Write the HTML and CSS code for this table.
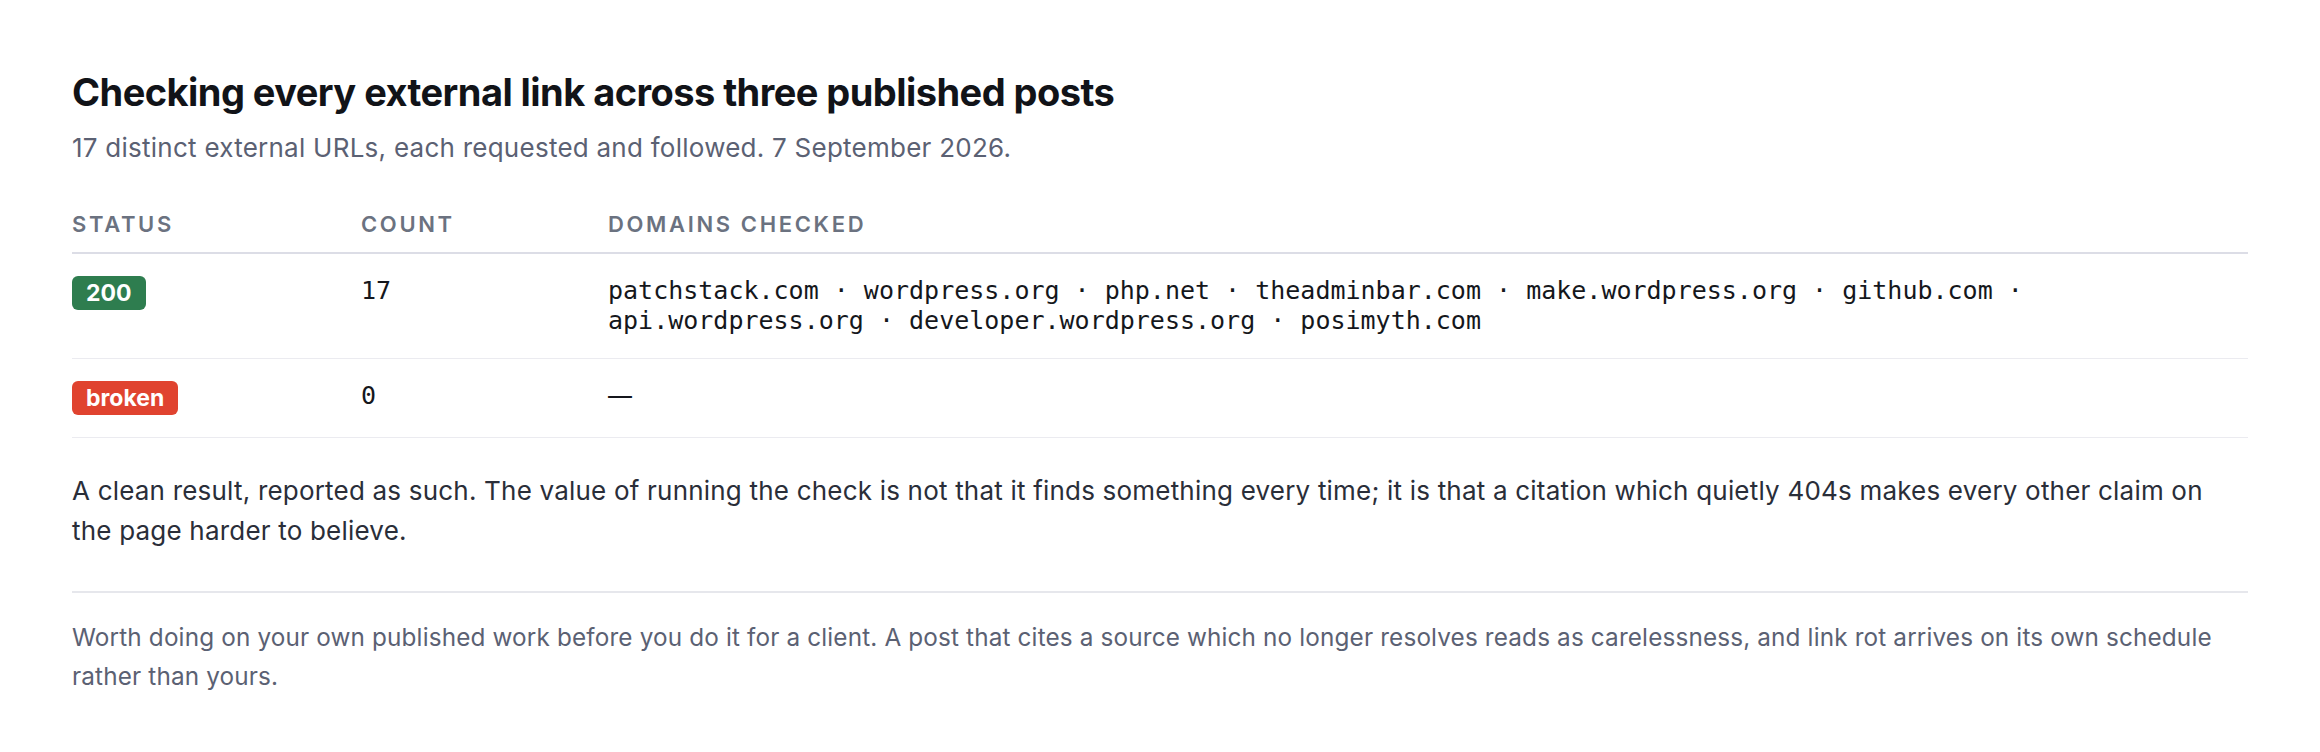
FILE: index.html
```html
<!DOCTYPE html>
<html lang="en">
<head>
<meta charset="utf-8">
<title>Link check</title>
<link rel="stylesheet" href="styles.css">
</head>
<body>
<main class="report">
  <h1 class="title">Checking every external link across three published posts</h1>
  <p class="subtitle">17 distinct external URLs, each requested and followed. 7 September 2026.</p>

  <div class="table">
    <div class="row head">
      <div class="cell">Status</div>
      <div class="cell">Count</div>
      <div class="cell">Domains checked</div>
    </div>
    <div class="row">
      <div class="cell"><span class="badge ok">200</span></div>
      <div class="cell mono">17</div>
      <div class="cell mono">patchstack.com · wordpress.org · php.net · theadminbar.com · make.wordpress.org · github.com · api.wordpress.org · developer.wordpress.org · posimyth.com</div>
    </div>
    <div class="row">
      <div class="cell"><span class="badge bad">broken</span></div>
      <div class="cell mono">0</div>
      <div class="cell mono"><span class="dash">—</span></div>
    </div>
  </div>

  <p class="body">A clean result, reported as such. The value of running the check is not that it finds something every time; it is that a citation which quietly 404s makes every other claim on the page harder to believe.</p>

  <hr class="rule">

  <p class="note">Worth doing on your own published work before you do it for a client. A post that cites a source which no longer resolves reads as carelessness, and link rot arrives on its own schedule rather than yours.</p>
</main>
</body>
</html>
```

FILE: styles.css
```css
* { box-sizing: border-box; }

html, body {
  margin: 0;
  padding: 0;
  background: #ffffff;
}

body {
  font-family: Inter, "Noto Sans", "Liberation Sans", sans-serif;
  color: #2a2e39;
}

.report {
  padding: 69px 72px 40px;
}

.title {
  margin: 0;
  font-size: 38px;
  line-height: 46px;
  font-weight: 700;
  letter-spacing: -0.55px;
  color: #111318;
}

.subtitle {
  margin: 14px 0 0;
  font-size: 26px;
  line-height: 38px;
  letter-spacing: 0.25px;
  color: #5b6173;
}

.table {
  margin-top: 43px;
}

.row {
  display: grid;
  grid-template-columns: 289px 247px 1fr;
  align-items: start;
  padding: 22px 0;
  border-bottom: 1px solid #ebebf0;
}

.row.head {
  padding: 0 0 14px;
  border-bottom: 2px solid #dcdde6;
}

.row.head .cell {
  font-size: 22px;
  line-height: 28px;
  font-weight: 600;
  letter-spacing: 0.12em;
  text-transform: uppercase;
  color: #6b7280;
}

.mono {
  font-family: "DejaVu Sans Mono", "Liberation Mono", monospace;
  font-size: 25px;
  line-height: 30px;
  color: #15171c;
}

.dash {
  font-family: Inter, "Noto Sans", sans-serif;
  font-size: 24px;
}

.badge {
  display: inline-block;
  height: 34px;
  padding: 0 14px;
  border-radius: 6px;
  font-size: 23px;
  line-height: 34px;
  font-weight: 700;
  color: #ffffff;
}

.badge.ok { background: #2e7d4f; }
.badge.bad { background: #e0432f; }

.body {
  margin: 33px 0 0;
  font-size: 26px;
  line-height: 40px;
  letter-spacing: 0.2px;
  color: #2a2e39;
}

.rule {
  margin: 40px 0 0;
  border: 0;
  border-top: 2px solid #e6e7ec;
}

.note {
  margin: 25px 0 0;
  font-size: 24.3px;
  line-height: 39px;
  letter-spacing: 0.15px;
  color: #5b6173;
}
```
